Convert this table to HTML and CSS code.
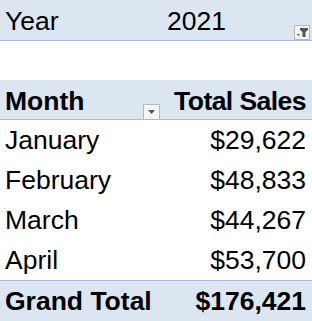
FILE: index.html
```html
<!DOCTYPE html>
<html>
<head>
<meta charset="utf-8">
<link rel="stylesheet" href="styles.css">
</head>
<body>
<div class="sheet">
  <div class="row filter-row">
    <div class="cell label">Year</div>
    <div class="cell value">
      <span>2021</span>
      <span class="btn filter-btn">
        <svg width="11" height="9" viewBox="0 0 11 9"><path d="M3 0h8v2l-2.5 2v5h-3v-5L3 2z" fill="#555"/><path d="M0 6h3l-1.5 2z" fill="#555"/></svg>
      </span>
    </div>
  </div>
  <div class="row blank"></div>
  <div class="row head-row">
    <div class="cell label bold">Month
      <span class="btn drop-btn">
        <svg width="7" height="4" viewBox="0 0 7 4"><path d="M0 0h7L3.5 4z" fill="#555"/></svg>
      </span>
    </div>
    <div class="cell num bold tight">Total Sales</div>
  </div>
  <div class="row data"><div class="cell label">January</div><div class="cell num">$29,622</div></div>
  <div class="row data"><div class="cell label">February</div><div class="cell num">$48,833</div></div>
  <div class="row data"><div class="cell label">March</div><div class="cell num">$44,267</div></div>
  <div class="row data"><div class="cell label">April</div><div class="cell num">$53,700</div></div>
  <div class="row total-row"><div class="cell label bold">Grand Total</div><div class="cell num bold">$176,421</div></div>
</div>
</body>
</html>
```
FILE: styles.css
```css
html, body {
  margin: 0;
  padding: 0;
  background: #ffffff;
}
.sheet {
  width: 312px;
  font-family: "Liberation Sans", Arial, sans-serif;
  font-size: 26.5px;
  line-height: 40px;
  color: #000;
}
.row {
  display: grid;
  grid-template-columns: 163px 1fr;
  height: 40px;
  box-sizing: border-box;
}
.cell {
  display: flex;
  align-items: flex-start;
  padding: 0 6px 0 5px;
  position: relative;
  white-space: nowrap;
}
.bold { font-weight: bold; }
.tight { letter-spacing: -0.55px; }
.num { justify-content: flex-end; }
.filter-row {
  background: #dce6f1;
  border-bottom: 1px solid #a7bde0;
  height: 41px;
}
.filter-row .cell { padding-top: 1px; }
.value {
  padding-left: 4px;
  justify-content: space-between;
}
.blank { height: 39px; }
.head-row {
  background: #dce6f1;
  border-bottom: 1px solid #a7bde0;
}
.head-row .cell { padding-top: 1px; }
.total-row {
  background: #dce6f1;
  border-top: 1px solid #a7bde0;
  height: 41px;
}
.btn {
  position: absolute;
  box-sizing: border-box;
  border: 1px solid #b8b8b8;
  background: #f4f4f4;
  display: flex;
  align-items: center;
  justify-content: center;
}
.filter-btn {
  right: 2px;
  bottom: 1px;
  width: 16px;
  height: 15px;
}
.drop-btn {
  right: 3px;
  bottom: 1px;
  width: 17px;
  height: 16px;
}
```
